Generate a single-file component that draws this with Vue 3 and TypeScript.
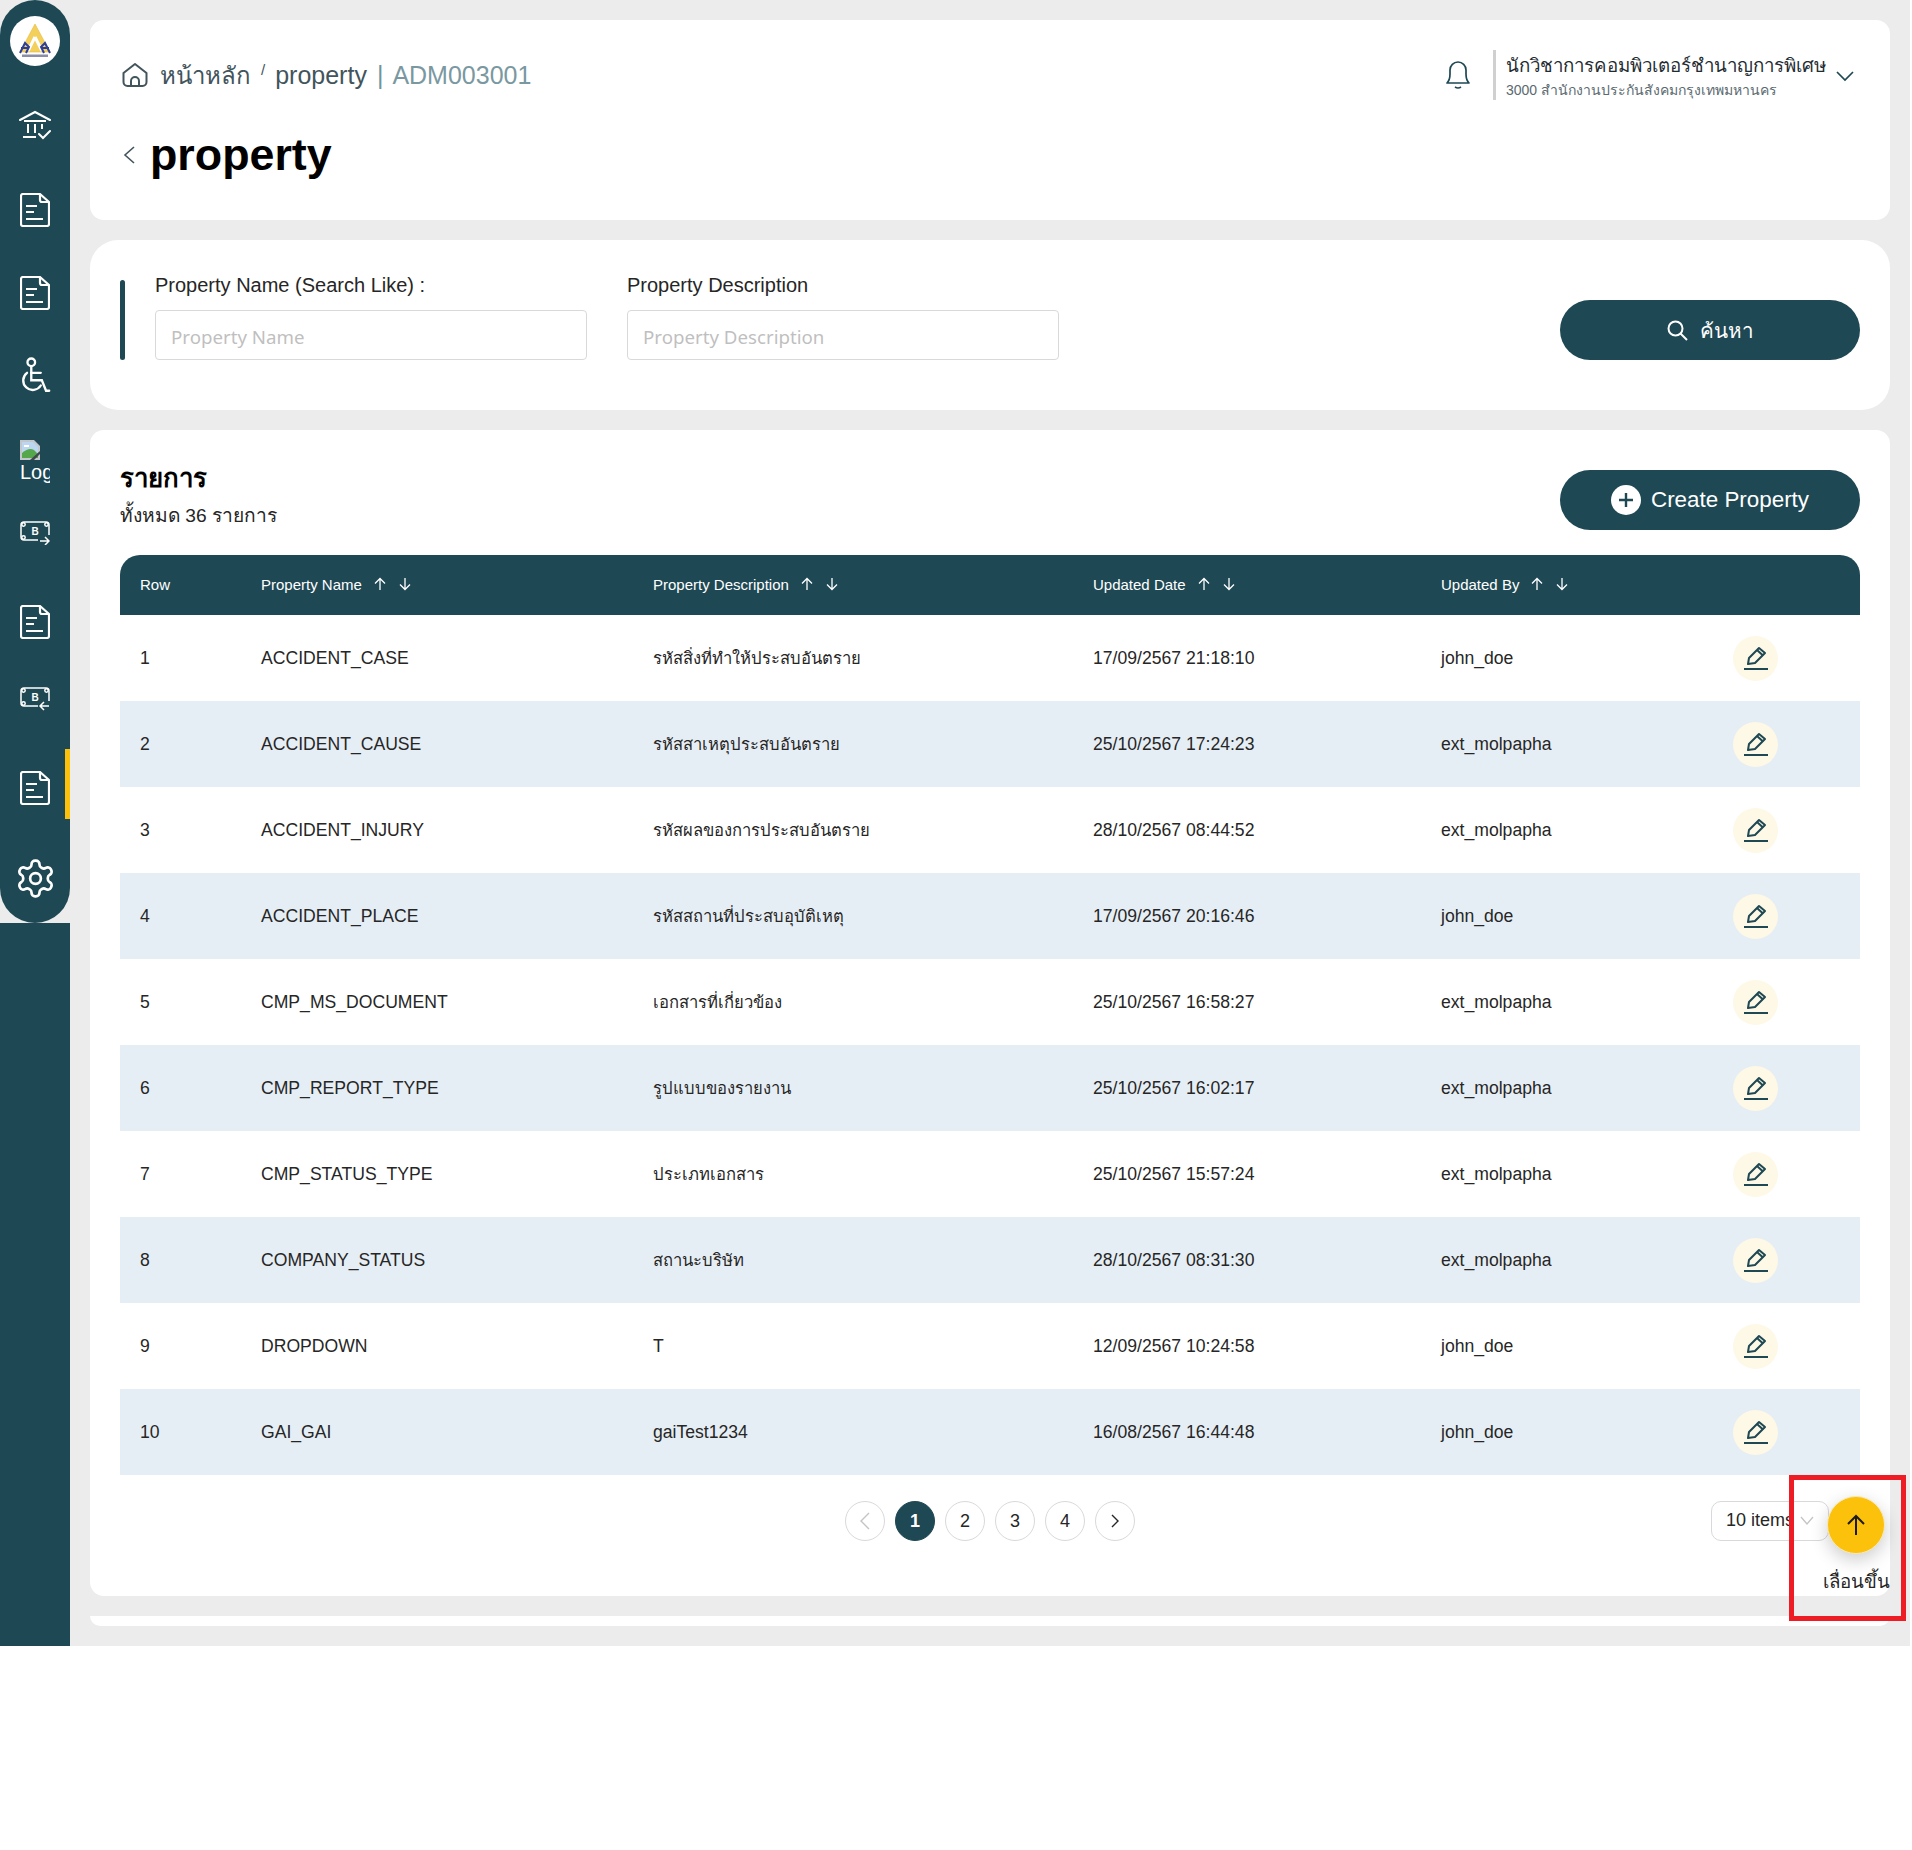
<script setup lang="ts">
type Row = { id: number; name: string; desc: string; date: string; by: string }

const rows: Row[] = [
  { id: 1, name: 'ACCIDENT_CASE', desc: 'รหัสสิ่งที่ทำให้ประสบอันตราย', date: '17/09/2567 21:18:10', by: 'john_doe' },
  { id: 2, name: 'ACCIDENT_CAUSE', desc: 'รหัสสาเหตุประสบอันตราย', date: '25/10/2567 17:24:23', by: 'ext_molpapha' },
  { id: 3, name: 'ACCIDENT_INJURY', desc: 'รหัสผลของการประสบอันตราย', date: '28/10/2567 08:44:52', by: 'ext_molpapha' },
  { id: 4, name: 'ACCIDENT_PLACE', desc: 'รหัสสถานที่ประสบอุบัติเหตุ', date: '17/09/2567 20:16:46', by: 'john_doe' },
  { id: 5, name: 'CMP_MS_DOCUMENT', desc: 'เอกสารที่เกี่ยวข้อง', date: '25/10/2567 16:58:27', by: 'ext_molpapha' },
  { id: 6, name: 'CMP_REPORT_TYPE', desc: 'รูปแบบของรายงาน', date: '25/10/2567 16:02:17', by: 'ext_molpapha' },
  { id: 7, name: 'CMP_STATUS_TYPE', desc: 'ประเภทเอกสาร', date: '25/10/2567 15:57:24', by: 'ext_molpapha' },
  { id: 8, name: 'COMPANY_STATUS', desc: 'สถานะบริษัท', date: '28/10/2567 08:31:30', by: 'ext_molpapha' },
  { id: 9, name: 'DROPDOWN', desc: 'T', date: '12/09/2567 10:24:58', by: 'john_doe' },
  { id: 10, name: 'GAI_GAI', desc: 'gaiTest1234', date: '16/08/2567 16:44:48', by: 'john_doe' }
]

const columns = ['Property Name', 'Property Description', 'Updated Date', 'Updated By']

const isThai = (s: string) => /[\u0E00-\u0E7F]/.test(s)

// nav items are not evenly spaced in the design, so the gap comes from data
const nav = [
  { icon: 'bank', gap: 21 },
  { icon: 'doc', gap: 45 },
  { icon: 'doc', gap: 43 },
  { icon: 'chair', gap: 43 },
  { icon: 'broken', gap: 46 },
  { icon: 'moneyOut', gap: 31 },
  { icon: 'doc', gap: 49 },
  { icon: 'moneyIn', gap: 37 },
  { icon: 'doc', gap: 49, active: true },
  { icon: 'gear', gap: 50 }
]
</script>

<template>
  <div class="page">
    <aside class="side">
      <div class="rail">
        <div class="logoWrap">
          <div class="logo">
            <svg width="40" height="40" viewBox="0 0 40 40">
              <path d="M20 3 L35 31 H5 Z" fill="#f3cf5c" />
              <path d="M20 3 L35 31 H5 Z" fill="none" stroke="#e9b93a" stroke-width="0.6" />
              <path d="M20 16 L27 30 M20 16 L13 30" stroke="#fff" stroke-width="3" />
              <path d="M5 32 L10 22 L14 26 L11 32 M35 32 L30 22 L26 26 L29 32 M6 27 H14 M26 27 H34" fill="none" stroke="#2c3f9c" stroke-width="2" />
              <rect x="7" y="33.5" width="26" height="2.5" fill="#8b8ea8" />
            </svg>
          </div>
        </div>
        <div v-for="(item, i) in nav" :key="i" class="navItem" :class="{ active: item.active }" :style="{ marginTop: item.gap + 'px' }">
          <svg v-if="item.icon === 'bank'" width="32" height="30" viewBox="0 0 32 30" fill="none" stroke="#fff" stroke-width="2">
            <path d="M1 10 L16 2 L31 10" stroke-linecap="round" />
            <path d="M5 11 H27" />
            <path d="M9 14 V23 M16 14 V23 M23 14 V19" />
            <path d="M4 27 H17" />
            <path d="M20 24 L24 28 L31 21" stroke-linecap="round" />
          </svg>
          <svg v-else-if="item.icon === 'doc'" width="30" height="34" viewBox="0 0 30 34" fill="none" stroke="#fff" stroke-width="2.2">
            <path d="M3 1 H20 L29 9 V31 a2 2 0 0 1 -2 2 H3 a2 2 0 0 1 -2 -2 V3 a2 2 0 0 1 2 -2 Z" stroke-linejoin="round" />
            <path d="M20 1 V7 a2 2 0 0 0 2 2 H29" />
            <path d="M6 13 H17 M6 19 H14 M6 26 H23" />
          </svg>
          <svg v-else-if="item.icon === 'chair'" width="33" height="38" viewBox="0 0 30 36" fill="none" stroke="#fff" stroke-width="2.2" stroke-linecap="round">
            <circle cx="11" cy="5" r="3.6" />
            <path d="M11 9 V22 H21 L25 32 H28" />
            <path d="M11 15 H20" />
            <path d="M7 15 A9 9 0 1 0 20 27" />
          </svg>
          <div v-else-if="item.icon === 'broken'" class="broken">
            <svg width="20" height="20" viewBox="0 0 20 20">
              <path d="M0 0 H14 L20 6 V20 H0 Z" fill="#c3c7cc" />
              <path d="M2 2 H13 L18 7 V18 H2 Z" fill="#bcd6f2" />
              <path d="M2 18 V13 Q9 7 14 10 L18 14 V18 Z" fill="#54a84b" />
              <path d="M10 20 L20 11 V14 L14 20 Z" fill="#40474e" />
              <path d="M4 6 H9" stroke="#fff" stroke-width="2" />
            </svg>
            <span class="brokenAlt">Logo</span>
          </div>
          <svg v-else-if="item.icon === 'moneyOut' || item.icon === 'moneyIn'" width="30" height="24" viewBox="0 0 30 24" fill="none" stroke="#fff" stroke-width="1.5">
            <path d="M4 1 H26 Q29 1 29 4 V14 M18 19 H4 Q1 19 1 16 V4 Q1 1 4 1" />
            <circle cx="3.500" cy="3.500" r="1.700" />
            <circle cx="26.500" cy="3.500" r="1.700" />
            <circle cx="3.500" cy="16.500" r="1.700" />
            <text x="15" y="14" font-size="10" font-weight="700" text-anchor="middle" fill="#fff" stroke="none" font-family="Liberation Sans, sans-serif">B</text>
            <path v-if="item.icon === 'moneyOut'" d="M20 20 H29 M25 16 L29 20 L25 24" />
            <path v-else d="M29 19 H20 M24 15 L20 19 L24 23" />
          </svg>
          <svg v-else width="43" height="43" viewBox="0 0 24 24" fill="none" stroke="#fff" stroke-width="1.5" stroke-linecap="round" stroke-linejoin="round">
            <path d="M12.22 2h-.44a2 2 0 0 0-2 2v.18a2 2 0 0 1-1 1.73l-.43.25a2 2 0 0 1-2 0l-.15-.08a2 2 0 0 0-2.73.73l-.22.38a2 2 0 0 0 .73 2.73l.15.1a2 2 0 0 1 1 1.72v.51a2 2 0 0 1-1 1.74l-.15.09a2 2 0 0 0-.73 2.73l.22.38a2 2 0 0 0 2.73.73l.15-.08a2 2 0 0 1 2 0l.43.25a2 2 0 0 1 1 1.73V20a2 2 0 0 0 2 2h.44a2 2 0 0 0 2-2v-.18a2 2 0 0 1 1-1.73l.43-.25a2 2 0 0 1 2 0l.15.08a2 2 0 0 0 2.73-.73l.22-.39a2 2 0 0 0-.73-2.73l-.15-.08a2 2 0 0 1-1-1.74v-.5a2 2 0 0 1 1-1.74l.15-.09a2 2 0 0 0 .73-2.73l-.22-.38a2 2 0 0 0-2.73-.73l-.15.08a2 2 0 0 1-2 0l-.43-.25a2 2 0 0 1-1-1.73V4a2 2 0 0 0-2-2z" />
            <circle cx="12" cy="12" r="3" />
          </svg>
        </div>
      </div>
      <div class="railRest"></div>
    </aside>

    <main class="main">
      <section class="card topCard">
        <div class="topLeft">
          <div class="crumbs">
            <svg class="homeIcon" width="26" height="26" viewBox="0 0 26 26" fill="none" stroke="#42545c" stroke-width="2">
              <path d="M1.5 11 L13 2 L24.500 11 V20 a4 4 0 0 1 -4 4 H5.500 a4 4 0 0 1 -4 -4 Z" stroke-linejoin="round" />
              <path d="M9 24 V19 a4 4 0 0 1 8 0 V24" />
            </svg>
            <span class="crumbThai">หน้าหลัก</span>
            <span class="crumbSep">/</span>
            <span>property</span>
            <span class="crumbBar">|</span>
            <span class="crumbCode">ADM003001</span>
          </div>
          <div class="titleRow">
            <svg width="14" height="20" viewBox="0 0 14 20" fill="none" stroke="#42545c" stroke-width="1.6"><path d="M12 2 L3 10 L12 18" /></svg>
            <h1>property</h1>
          </div>
        </div>
        <div class="topRight">
          <svg class="bell" width="26" height="30" viewBox="0 0 26 30" fill="none" stroke="#1e4854" stroke-width="1.7">
            <path d="M2 23 Q5 20 5 14 V10 a8 8 0 0 1 16 0 V14 Q21 20 24 23 Z" stroke-linejoin="round" />
            <path d="M10 27 Q13 29 16 27" />
          </svg>
          <div class="user">
            <div class="userName">นักวิชาการคอมพิวเตอร์ชำนาญการพิเศษ</div>
            <div class="userOrg">3000 สำนักงานประกันสังคมกรุงเทพมหานคร</div>
          </div>
          <svg class="userChevron" width="18" height="11" viewBox="0 0 18 11" fill="none" stroke="#1e4854" stroke-width="1.7"><path d="M1 1 L9 9 L17 1" /></svg>
        </div>
      </section>

      <section class="card searchCard">
        <div class="bar"></div>
        <label class="field">
          <span>Property Name (Search Like) :</span>
          <input placeholder="Property Name" />
        </label>
        <label class="field">
          <span>Property Description</span>
          <input placeholder="Property Description" />
        </label>
        <button class="pill searchBtn">
          <svg width="21" height="21" viewBox="0 0 21 21" fill="none" stroke="#fff" stroke-width="2"><circle cx="8.500" cy="8.500" r="7" /><path d="M13.500 13.500 L20 20" /></svg>
          <span>ค้นหา</span>
        </button>
      </section>

      <section class="card listCard">
        <div class="listHead">
          <div>
            <div class="listTitle">รายการ</div>
            <div class="listCount">ทั้งหมด 36 รายการ</div>
          </div>
          <button class="pill createBtn">
            <svg width="30" height="30" viewBox="0 0 30 30"><circle cx="15" cy="15" r="15" fill="#fff" /><path d="M15 8 V22 M8 15 H22" stroke="#1e4854" stroke-width="2.400" /></svg>
            <span>Create Property</span>
          </button>
        </div>

        <table class="grid">
          <colgroup>
            <col style="width: 141px" />
            <col style="width: 392px" />
            <col style="width: 440px" />
            <col style="width: 348px" />
            <col style="width: 292px" />
            <col style="width: 127px" />
          </colgroup>
          <thead>
            <tr>
              <th>Row</th>
              <th v-for="c in columns" :key="c">
                <div class="th">
                  <span>{{ c }}</span>
                  <svg class="sort" width="14" height="14" viewBox="0 0 14 14" fill="none" stroke="#fff" stroke-width="1.300"><path d="M7 13 V1.500 M2 6.500 L7 1.500 L12 6.500" /></svg>
                  <svg class="sort" width="14" height="14" viewBox="0 0 14 14" fill="none" stroke="#fff" stroke-width="1.300"><path d="M7 1 V12.500 M2 7.500 L7 12.500 L12 7.500" /></svg>
                </div>
              </th>
              <th></th>
            </tr>
          </thead>
          <tbody>
            <tr v-for="r in rows" :key="r.id">
              <td>{{ r.id }}</td>
              <td>{{ r.name }}</td>
              <td :class="{ thai: isThai(r.desc) }">{{ r.desc }}</td>
              <td>{{ r.date }}</td>
              <td>{{ r.by }}</td>
              <td>
                <div class="editBtn">
                  <svg width="26" height="26" viewBox="0 0 26 26" fill="none" stroke="#1e4854" stroke-width="2">
                    <path d="M5 19 L6 13 L16 3 L22 8 L12 18 Z" stroke-linejoin="round" />
                    <path d="M14 5 L20 10.500" />
                    <path d="M1 24 H25" />
                  </svg>
                </div>
              </td>
            </tr>
          </tbody>
        </table>

        <div class="listFoot">
          <div></div>
          <div class="pager">
            <span class="pageBtn disabled">
              <svg width="12" height="18" viewBox="0 0 12 18" fill="none" stroke="#c4c4c4" stroke-width="1.400"><path d="M10 1 L2 9 L10 17" /></svg>
            </span>
            <span class="pageBtn current">1</span>
            <span class="pageBtn">2</span>
            <span class="pageBtn">3</span>
            <span class="pageBtn">4</span>
            <span class="pageBtn">
              <svg width="12" height="14" viewBox="0 0 12 14" fill="none" stroke="#262626" stroke-width="1.400"><path d="M3 1 L9 7 L3 13" /></svg>
            </span>
          </div>
          <div class="sizeSelect">
            <span>10 items</span>
            <svg width="14" height="9" viewBox="0 0 14 9" fill="none" stroke="#c4c4c4" stroke-width="1.300"><path d="M1 1 L7 8 L13 1" /></svg>
          </div>
        </div>
      </section>

      <section class="card stubCard"></section>
    </main>

    <div class="scrollUp">
      <button class="fab">
        <svg width="20" height="22" viewBox="0 0 20 22" fill="none" stroke="#1c1c1c" stroke-width="2"><path d="M10 21 V2 M2 10 L10 2 L18 10" /></svg>
      </button>
      <span>เลื่อนขึ้น</span>
    </div>
    <div class="redBox"></div>
  </div>
</template>

<style scoped>
.page {
  position: relative;
  display: flex;
  width: 1910px;
  height: 1646px;
  background: #ececec;
  font-family: "Liberation Sans", "Noto Sans", sans-serif;
  color: #262626;
}

.side {
  display: flex;
  flex-direction: column;
  width: 70px;
  flex-shrink: 0;
}

.rail {
  height: 923px;
  background: #1e4854;
  border-radius: 35px;
}

.railRest {
  flex: 1;
  background: #1e4854;
}

.logoWrap {
  height: 84px;
  display: flex;
  align-items: flex-start;
  justify-content: center;
  padding-top: 16px;
  box-sizing: border-box;
}

.logo {
  width: 50px;
  height: 50px;
  border-radius: 50%;
  background: #fff;
  display: flex;
  align-items: center;
  justify-content: center;
}

.navItem {
  position: relative;
  height: 40px;
  display: flex;
  align-items: center;
  justify-content: center;
}

.navItem.active::after {
  content: "";
  position: absolute;
  right: 0;
  top: -19px;
  width: 5px;
  height: 70px;
  background: #fcc10b;
}

.broken {
  width: 30px;
  overflow: hidden;
  color: #fff;
  font-size: 20px;
  line-height: 25px;
}

.broken svg {
  display: block;
}

.brokenAlt {
  display: block;
  white-space: nowrap;
}

.main {
  flex: 1;
  display: flex;
  flex-direction: column;
  gap: 20px;
  padding: 20px;
  min-width: 0;
}

.card {
  background: #fff;
  border-radius: 14px;
  box-sizing: border-box;
}

.topCard {
  height: 200px;
  display: flex;
  justify-content: space-between;
  padding: 0 36px 0 32px;
}

.crumbs {
  display: flex;
  align-items: center;
  height: 30px;
  margin-top: 40px;
  font-size: 25px;
  color: #42545c;
}

.homeIcon {
  margin-right: 12px;
}

.crumbThai {
  font-size: 24px;
}

.crumbSep {
  font-size: 15px;
  margin: -12px 10px 0 10px;
}

.crumbBar {
  margin: 0 9px 0 10px;
  color: #6f95a0;
}

.crumbCode {
  color: #7a98a1;
}

.titleRow {
  display: flex;
  align-items: center;
  gap: 14px;
  margin-top: 38px;
}

.titleRow svg {
  margin-top: 1px;
}

h1 {
  margin: 0;
  font-size: 44.8px;
  line-height: 52px;
  font-weight: 700;
  color: #000;
}

.topRight {
  display: flex;
  align-items: flex-start;
  padding-top: 30px;
}

.bell {
  margin: 10px 22px 0 0;
}

.user {
  border-left: 3px solid #d0d0d0;
  height: 50px;
  padding: 2px 0 0 10px;
  box-sizing: border-box;
}

.userName {
  font-size: 18.7px;
  line-height: 28px;
  color: #1f2d33;
  white-space: nowrap;
}

.userOrg {
  font-size: 14px;
  line-height: 20px;
  color: #5b6a70;
  white-space: nowrap;
}

.userChevron {
  margin: 21px 0 0 10px;
}

.searchCard {
  height: 170px;
  display: flex;
  align-items: flex-start;
  gap: 40px;
  padding: 32px 30px 0;
  border-radius: 28px;
}

.bar {
  width: 5px;
  height: 80px;
  margin: 8px -10px 0 0;
  background: #1e4854;
  border-radius: 3px;
}

.field {
  display: flex;
  flex-direction: column;
  width: 432px;
}

.field span {
  font-size: 20px;
  line-height: 26px;
  margin-bottom: 12px;
  color: #262626;
}

.field input {
  height: 50px;
  box-sizing: border-box;
  border: 1px solid #d9d9d9;
  border-radius: 4px;
  padding: 2px 15px 0;
  font-size: 18.7px;
  font-family: "Noto Sans", sans-serif;
  outline: none;
}

.field input::placeholder {
  color: #bfbfbf;
}

.pill {
  display: flex;
  align-items: center;
  justify-content: center;
  width: 300px;
  height: 60px;
  border: 0;
  border-radius: 30px;
  background: #1e4854;
  color: #fff;
  font-family: inherit;
  font-size: 22.4px;
}

.searchBtn {
  margin: 28px 0 0 auto;
  gap: 12px;
  font-size: 20.6px;
}

.listCard {
  height: 1166px;
  padding: 30px 30px 0;
}

.listHead {
  display: flex;
  justify-content: space-between;
  height: 95px;
}

.listTitle {
  font-size: 25.8px;
  font-weight: 700;
  line-height: 36px;
  color: #000;
}

.listCount {
  font-size: 19.2px;
  line-height: 34px;
  margin-top: 3px;
  color: #262626;
}

.createBtn {
  margin-top: 10px;
  gap: 10px;
}

.grid {
  width: 1740px;
  table-layout: fixed;
  border-collapse: separate;
  border-spacing: 0;
}

.grid th {
  height: 60px;
  padding: 0 0 2px;
  box-sizing: border-box;
  background: #1e4854;
  color: #fff;
  font-size: 15px;
  font-weight: 400;
  text-align: left;
}

.grid th:first-child {
  padding-left: 20px;
  border-top-left-radius: 20px;
}

.grid th:last-child {
  border-top-right-radius: 20px;
}

.th {
  display: flex;
  align-items: center;
}

.sort {
  margin-left: 11px;
}

.grid td {
  height: 86px;
  padding: 0;
  font-size: 17.6px;
  color: #262626;
}

.grid td.thai {
  font-size: 16.6px;
}

.grid td:first-child {
  padding-left: 20px;
}

.grid tbody tr:nth-child(even) td {
  background: #e6eef5;
}

.editBtn {
  width: 45px;
  height: 45px;
  border-radius: 50%;
  background: #fef8e6;
  display: flex;
  align-items: center;
  justify-content: center;
}

.listFoot {
  display: grid;
  grid-template-columns: 1fr auto 1fr;
  align-items: center;
  margin-top: 26px;
}

.pager {
  display: flex;
  gap: 10px;
}

.pageBtn {
  width: 40px;
  height: 40px;
  box-sizing: border-box;
  border: 1px solid #d9d9d9;
  border-radius: 50%;
  display: flex;
  align-items: center;
  justify-content: center;
  font-size: 18px;
  color: #262626;
}

.pageBtn.current {
  background: #1e4854;
  border-color: #1e4854;
  color: #fff;
  font-weight: 700;
}

.sizeSelect {
  justify-self: end;
  display: flex;
  align-items: center;
  justify-content: space-between;
  width: 118px;
  height: 40px;
  margin-right: 31px;
  padding: 0 14px 2px;
  box-sizing: border-box;
  border: 1px solid #d9d9d9;
  border-radius: 10px;
  font-size: 18px;
  white-space: nowrap;
  color: #262626;
}

.stubCard {
  height: 10px;
  border-radius: 0 0 14px 14px;
}

.scrollUp {
  position: absolute;
  left: 1816px;
  top: 1496px;
  width: 80px;
  display: flex;
  flex-direction: column;
  align-items: center;
  font-size: 18.7px;
  color: #262626;
}

.scrollUp span {
  line-height: 28px;
  margin-top: 14px;
  white-space: nowrap;
}

.fab {
  width: 58px;
  height: 58px;
  border: 1px solid #f7e9b8;
  border-radius: 50%;
  background: #fcc10b;
  box-shadow: 0 6px 18px rgba(0, 0, 0, 0.2);
  display: flex;
  align-items: center;
  justify-content: center;
  padding: 0;
}

.redBox {
  position: absolute;
  left: 1789px;
  top: 1475px;
  width: 117px;
  height: 146px;
  box-sizing: border-box;
  border: 5px solid #ee1c25;
  pointer-events: none;
}
</style>

<style>
body {
  background: #fff;
}
</style>
